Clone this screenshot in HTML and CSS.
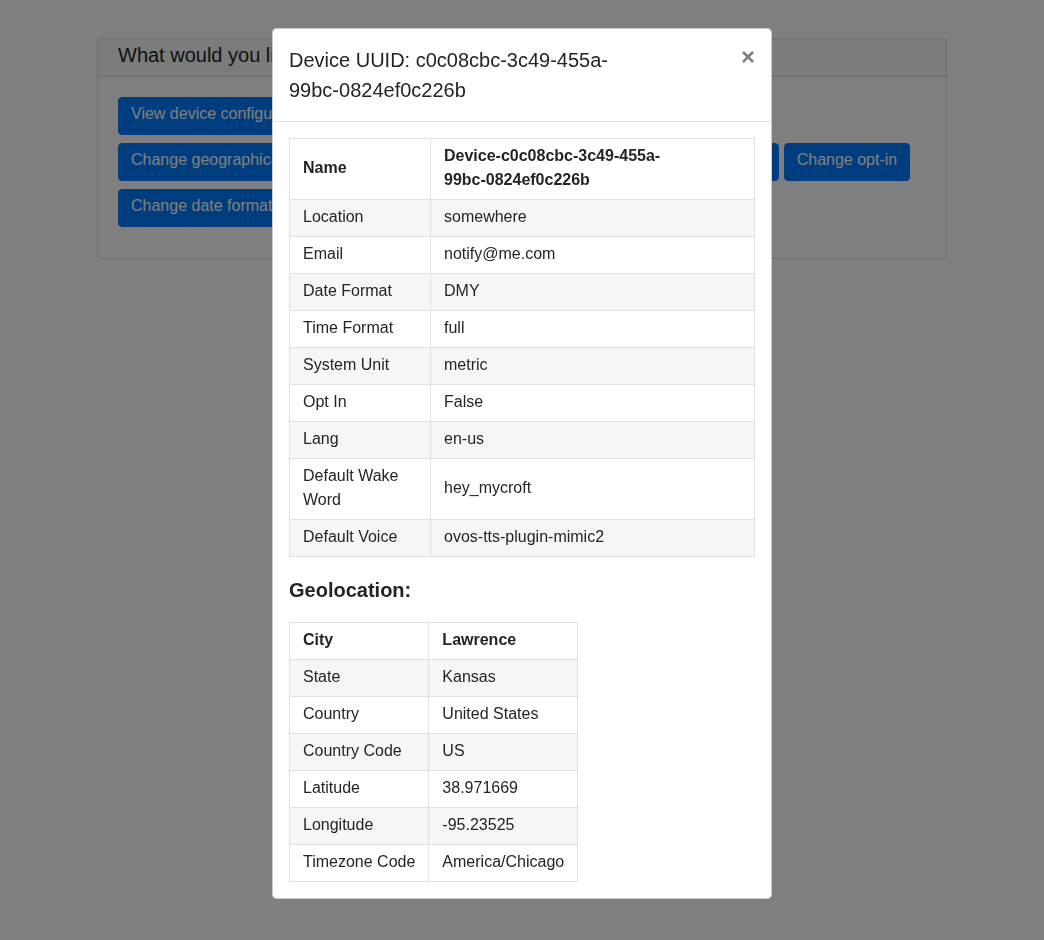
FILE: index.html
```html
<!DOCTYPE html>
<html lang="en">
<head>
<meta charset="utf-8">
<title>Device configuration</title>
<link rel="stylesheet" href="styles.css">
</head>
<body>
<div class="page">
  <div class="card">
    <div class="card-header">What would you like to do?</div>
    <div class="card-body">
      <div class="btn-row">
        <button class="btn">View device configuration</button>
        <button class="btn">Change device name</button>
        <button class="btn">Change location</button>
      </div>
      <div class="btn-row">
        <button class="btn">Change geographical location</button>
        <button class="btn">Change email</button>
        <button class="btn">Change time format</button>
        <button class="btn">Change lang</button>
        <button class="btn">Change opt-in</button>
      </div>
      <div class="btn-row">
        <button class="btn">Change date format</button>
        <button class="btn">Change system unit</button>
        <button class="btn">Change wake word</button>
      </div>
    </div>
  </div>
</div>

<div class="backdrop"></div>

<div class="modal">
  <div class="modal-dialog">
    <div class="modal-content">
      <div class="modal-header">
        <h5 class="modal-title">Device UUID: c0c08cbc-3c49-455a-99bc-0824ef0c226b</h5>
        <button class="close" type="button">&times;</button>
      </div>
      <div class="modal-body">
        <table class="table cfg">
          <thead>
            <tr><th>Name</th><th><span class="wrap-val">Device-c0c08cbc-3c49-455a-99bc-0824ef0c226b</span></th></tr>
          </thead>
          <tbody>
            <tr><td>Location</td><td>somewhere</td></tr>
            <tr><td>Email</td><td>notify@me.com</td></tr>
            <tr><td>Date Format</td><td>DMY</td></tr>
            <tr><td>Time Format</td><td>full</td></tr>
            <tr><td>System Unit</td><td>metric</td></tr>
            <tr><td>Opt In</td><td>False</td></tr>
            <tr><td>Lang</td><td>en-us</td></tr>
            <tr><td>Default Wake Word</td><td>hey_mycroft</td></tr>
            <tr><td>Default Voice</td><td>ovos-tts-plugin-mimic2</td></tr>
          </tbody>
        </table>
        <h5 class="section-title">Geolocation:</h5>
        <table class="table geo">
          <thead>
            <tr><th>City</th><th>Lawrence</th></tr>
          </thead>
          <tbody>
            <tr><td>State</td><td>Kansas</td></tr>
            <tr><td>Country</td><td>United States</td></tr>
            <tr><td>Country Code</td><td>US</td></tr>
            <tr><td>Latitude</td><td>38.971669</td></tr>
            <tr><td>Longitude</td><td>-95.23525</td></tr>
            <tr><td>Timezone Code</td><td>America/Chicago</td></tr>
          </tbody>
        </table>
      </div>
    </div>
  </div>
</div>
</body>
</html>
```

FILE: styles.css
```css
* { box-sizing: border-box; }

html, body {
  margin: 0;
  padding: 0;
  background: #fff;
  color: #212529;
  font-family: "Liberation Sans", Arial, sans-serif;
  font-size: 16px;
  line-height: 1.5;
}

.page {
  padding-top: 38px;
}

.card {
  width: 850px;
  margin: 0 auto;
  border: 1px solid rgba(0, 0, 0, 0.125);
  border-radius: 4px;
  background: #fff;
}

.card-header {
  padding: 4px 20px 9px;
  font-size: 20px;
  line-height: 24px;
  background: rgba(0, 0, 0, 0.03);
  border-bottom: 1px solid rgba(0, 0, 0, 0.125);
}

.card-body {
  padding: 20px 20px 31px;
  display: flex;
  flex-direction: column;
  gap: 8px;
}

.btn-row {
  display: flex;
  gap: 5px;
}

.btn {
  font-family: inherit;
  font-size: 16px;
  line-height: 24px;
  padding: 4px 12px 8px;
  border: 1px solid #007bff;
  border-radius: 4px;
  background: #007bff;
  color: #fff;
  white-space: nowrap;
}

.backdrop {
  position: fixed;
  inset: 0;
  background: #000;
  opacity: 0.5;
}

.modal {
  position: fixed;
  inset: 0;
  overflow: hidden;
}

.modal-dialog {
  max-width: 500px;
  margin: 28px auto;
}

.modal-content {
  background: #fff;
  border: 1px solid rgba(0, 0, 0, 0.2);
  border-radius: 4.8px;
}

.modal-header {
  display: flex;
  align-items: flex-start;
  justify-content: space-between;
  padding: 16px;
  border-bottom: 1px solid #dee2e6;
}

.modal-title {
  margin: 0;
  max-width: 350px;
  font-size: 20px;
  font-weight: 400;
  line-height: 30px;
}

.close {
  padding: 16px;
  margin: -16px -16px -16px auto;
  background: transparent;
  border: 0;
  font-family: inherit;
  font-size: 24px;
  font-weight: 700;
  line-height: 1;
  color: #000;
  text-shadow: 0 1px 0 #fff;
  opacity: 0.5;
}

.modal-body {
  padding: 16px;
}

.table {
  border-collapse: collapse;
  color: #212529;
}

.table th,
.table td {
  border: 1px solid #dee2e6;
  padding: 5px 13px 7px;
  text-align: left;
  vertical-align: middle;
}

.table th {
  font-weight: 700;
}

.table tbody tr:nth-of-type(odd) {
  background: #f5f6f8;
}

.cfg {
  width: 100%;
}

.cfg th:first-child,
.cfg td:first-child {
  width: 141px;
}

.wrap-val {
  display: block;
  max-width: 240px;
}

.section-title {
  margin: 21px 0 20px;
  font-size: 20px;
  font-weight: 700;
  line-height: 24px;
}
```
